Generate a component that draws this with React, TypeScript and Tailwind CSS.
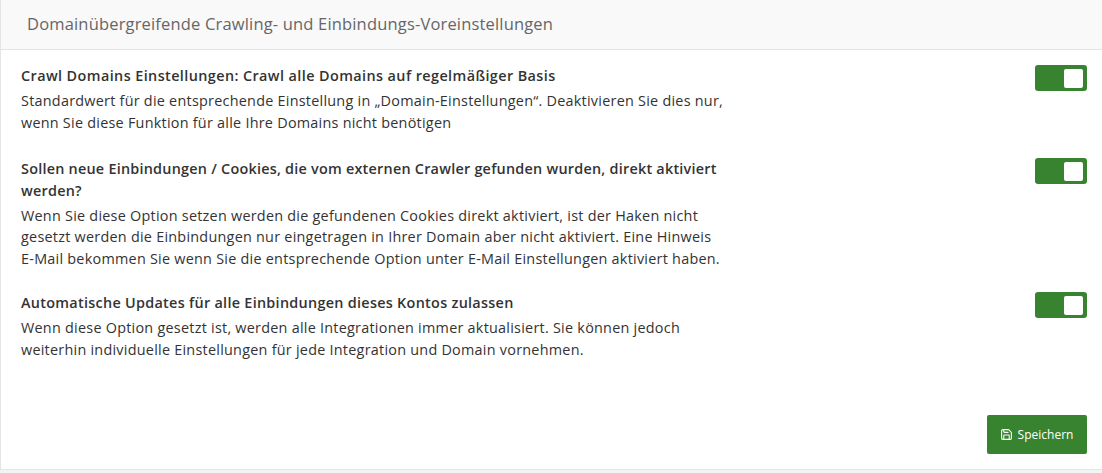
import { Save } from "lucide-react";

function Toggle() {
  return (
    <div className="w-[52px] h-[26px] bg-[#388330] rounded-[3px] flex justify-end items-center pr-[4px] shrink-0">
      <div className="w-[19px] h-[19px] bg-white rounded-[2px]" />
    </div>
  );
}

function Row({ title, lines, className, titleClass }: { title: string[]; lines: string[]; className: string; titleClass: string }) {
  return (
    <div className={`flex justify-between items-start ${className}`}>
      <div className="w-[720px]">
        <div className={`font-semibold text-[14.4px] leading-[21.6px] text-[#333] ${titleClass}`}>
          {title.map((t) => (
            <div key={t} className="whitespace-nowrap">{t}</div>
          ))}
        </div>
        <div className="mt-[3.6px] text-[14.4px] leading-[21.6px] text-[#333] tracking-[0.25px]">
          {lines.map((t) => (
            <div key={t} className="whitespace-nowrap">{t}</div>
          ))}
        </div>
      </div>
      <Toggle />
    </div>
  );
}

export default function App() {
  return (
    <div className="w-[1102px] h-[473px] bg-white overflow-hidden font-['Open_Sans','Lato',sans-serif] flex flex-col">
      <div className="flex-1 flex flex-col border-l border-b border-[#e4e4e4] h-[470px] min-h-0">
        <div className="h-[50px] shrink-0 bg-[#f9f9f9] border-b border-[#e4e4e4] flex items-center pl-[26px] text-[16.5px] text-[#666] tracking-[0.17px]">
          Domainübergreifende Crawling- und Einbindungs-Voreinstellungen
        </div>
        <div className="flex-1 flex flex-col pl-[20px] pr-[15px] pt-[15px]">
          <Row
            className="h-[93px]"
            titleClass="tracking-[0.41px]"
            title={["Crawl Domains Einstellungen: Crawl alle Domains auf regelmäßiger Basis"]}
            lines={[
              "Standardwert für die entsprechende Einstellung in „Domain-Einstellungen“. Deaktivieren Sie dies nur,",
              "wenn Sie diese Funktion für alle Ihre Domains nicht benötigen",
            ]}
          />
          <Row
            className="h-[134px]"
            titleClass="tracking-[0.24px]"
            title={["Sollen neue Einbindungen / Cookies, die vom externen Crawler gefunden wurden, direkt aktiviert", "werden?"]}
            lines={[
              "Wenn Sie diese Option setzen werden die gefundenen Cookies direkt aktiviert, ist der Haken nicht",
              "gesetzt werden die Einbindungen nur eingetragen in Ihrer Domain aber nicht aktiviert. Eine Hinweis",
              "E-Mail bekommen Sie wenn Sie die entsprechende Option unter E-Mail Einstellungen aktiviert haben.",
            ]}
          />
          <Row
            className="h-[100px]"
            titleClass="tracking-[0.29px]"
            title={["Automatische Updates für alle Einbindungen dieses Kontos zulassen"]}
            lines={[
              "Wenn diese Option gesetzt ist, werden alle Integrationen immer aktualisiert. Sie können jedoch",
              "weiterhin individuelle Einstellungen für jede Integration und Domain vornehmen.",
            ]}
          />
          <div className="flex justify-end mt-[23px]">
            <button className="w-[100px] h-[39px] bg-[#388330] rounded-[2px] text-white text-[12px] flex items-center justify-center gap-[5px] pr-[1px]">
              <Save size={13} strokeWidth={2} />
              Speichern
            </button>
          </div>
        </div>
      </div>
      <div className="h-[3px] bg-[#f3f3f3]" />
    </div>
  );
}
